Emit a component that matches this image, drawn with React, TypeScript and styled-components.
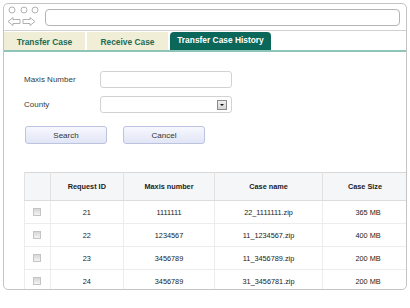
import styled, { createGlobalStyle } from "styled-components";

type Row = {
  id: number;
  maxis: string;
  caseName: string;
  size: string;
};

const rows: Row[] = [
  { id: 21, maxis: "1111111", caseName: "22_1111111.zip", size: "365 MB" },
  { id: 22, maxis: "1234567", caseName: "11_1234567.zip", size: "400 MB" },
  { id: 23, maxis: "3456789", caseName: "11_3456789.zip", size: "200 MB" },
  { id: 24, maxis: "3456789", caseName: "31_3456781.zip", size: "200 MB" },
];

const GlobalStyle = createGlobalStyle`
  body {
    margin: 0;
    background: #ffffff;
    font-family: "Liberation Sans", Arial, sans-serif;
  }
`;

const Frame = styled.div`
  margin: 3px 0 0 3px;
  width: 402px;
  height: 285px;
  border: 1px solid #c4c4c4;
  border-radius: 5px;
  overflow: hidden;
  display: flex;
  flex-direction: column;
  background: #fff;
`;

const BrowserBar = styled.div`
  height: 26px;
  border-bottom: 1px solid #d0d0d0;
  display: flex;
  align-items: center;
  padding: 0 6px 0 3px;
  gap: 4px;
  flex-shrink: 0;
`;

const AddressBar = styled.div`
  flex: 1;
  height: 15px;
  border: 1px solid #b4b4b4;
  border-radius: 4px;
  margin-top: 1px;
`;

const TabBar = styled.div`
  height: 19px;
  display: flex;
  align-items: flex-end;
  gap: 2px;
  border-bottom: 2px solid #8fc4b8;
  flex-shrink: 0;
`;

const Tab = styled.div<{ $active?: boolean; $width: number }>`
  width: ${(p) => p.$width}px;
  height: 18px;
  display: flex;
  align-items: ${(p) => (p.$active ? "flex-start" : "center")};
  padding-top: ${(p) => (p.$active ? "3px" : "2px")};
  box-sizing: border-box;
  justify-content: center;
  font-size: 8.4px;
  font-weight: bold;
  background: ${(p) => (p.$active ? "#0b675a" : "#f1eed7")};
  color: ${(p) => (p.$active ? "#ffffff" : "#1d6a55")};
  border-radius: ${(p) => (p.$active ? "4px 4px 0 0" : "0")};
`;

const Content = styled.div`
  padding: 19px 0 0 20px;
  display: flex;
  flex-direction: column;
`;

const FieldRow = styled.div`
  display: flex;
  align-items: center;
  height: 17px;
  margin-bottom: 8px;
`;

const Label = styled.div`
  width: 76px;
  font-size: 8px;
  color: #3a3a3a;
`;

const Input = styled.div`
  width: 130px;
  height: 15px;
  border: 1px solid #d2d2d2;
  border-radius: 3px;
  position: relative;
`;

const SelectButton = styled.div`
  position: absolute;
  right: 4px;
  top: 3px;
  width: 8px;
  height: 8px;
  border: 1px solid #8a8a8a;
  background: linear-gradient(#eeeeee, #d4d4d4);
  display: flex;
  align-items: center;
  justify-content: center;
`;

const Arrow = styled.div`
  width: 0;
  height: 0;
  border-left: 2px solid transparent;
  border-right: 2px solid transparent;
  border-top: 2px solid #111;
`;

const ButtonRow = styled.div`
  display: flex;
  gap: 16px;
  margin: 5px 0 0 1px;
`;

const Button = styled.div`
  width: 80px;
  height: 16px;
  border: 1px solid #bcc3de;
  border-radius: 3px;
  background: linear-gradient(#f7f8fe, #e1e5f5);
  font-size: 8px;
  color: #333;
  display: flex;
  align-items: center;
  justify-content: center;
`;

const Table = styled.table`
  margin-top: 28px;
  width: 384px;
  border-collapse: collapse;
  font-size: 7.3px;
  color: #222;
  border: 1px solid #d8d8d8;
`;

const HeadCell = styled.th<{ $width: number }>`
  width: ${(p) => p.$width}px;
  height: 27px;
  padding: 0;
  background: #f5f6f8;
  font-weight: bold;
  text-align: center;
  border-left: 1px solid #e2e2e2;
  border-bottom: 1px solid #dcdcdc;
`;

const Cell = styled.td`
  height: 22px;
  padding: 0;
  text-align: center;
  border-left: 1px solid #ececec;
  border-bottom: 1px solid #ececec;
`;

const Check = styled.div`
  width: 6px;
  height: 6px;
  margin: 0 auto;
  border: 1px solid #c4c4c4;
  background: linear-gradient(#d6d6d6, #f4f4f4);
`;

const SizeText = styled.span`
  padding-left: 6px;
`;

function BrowserControls() {
  return (
    <svg width="34" height="22" viewBox="0 0 34 22">
      <g fill="none" stroke="#a8a8a8" strokeWidth="0.9">
        <circle cx="5" cy="4" r="3" />
        <circle cx="17" cy="4" r="3" />
        <circle cx="28" cy="4" r="3" />
        <path d="M1 15.5 L6 11.5 L6 13.5 L13 13.5 L13 17.5 L6 17.5 L6 19.5 Z" />
        <path d="M28 15.5 L23 11.5 L23 13.5 L16 13.5 L16 17.5 L23 17.5 L23 19.5 Z" />
      </g>
    </svg>
  );
}

export default function App() {
  return (
    <>
      <GlobalStyle />
      <Frame>
        <BrowserBar>
          <BrowserControls />
          <AddressBar />
        </BrowserBar>
        <TabBar>
          <Tab $width={81}>Transfer Case</Tab>
          <Tab $width={81}>Receive Case</Tab>
          <Tab $width={101} $active>
            Transfer Case History
          </Tab>
        </TabBar>
        <Content>
          <FieldRow>
            <Label>Maxis Number</Label>
            <Input />
          </FieldRow>
          <FieldRow>
            <Label>County</Label>
            <Input>
              <SelectButton>
                <Arrow />
              </SelectButton>
            </Input>
          </FieldRow>
          <ButtonRow>
            <Button>Search</Button>
            <Button>Cancel</Button>
          </ButtonRow>
          <Table>
            <thead>
              <tr>
                <HeadCell $width={25} />
                <HeadCell $width={73}>Request ID</HeadCell>
                <HeadCell $width={91}>Maxis number</HeadCell>
                <HeadCell $width={108}>Case name</HeadCell>
                <HeadCell $width={85}>Case Size</HeadCell>
              </tr>
            </thead>
            <tbody>
              {rows.map((row) => (
                <tr key={row.id}>
                  <Cell>
                    <Check />
                  </Cell>
                  <Cell>{row.id}</Cell>
                  <Cell>{row.maxis}</Cell>
                  <Cell>{row.caseName}</Cell>
                  <Cell>
                    <SizeText>{row.size}</SizeText>
                  </Cell>
                </tr>
              ))}
            </tbody>
          </Table>
        </Content>
      </Frame>
    </>
  );
}
